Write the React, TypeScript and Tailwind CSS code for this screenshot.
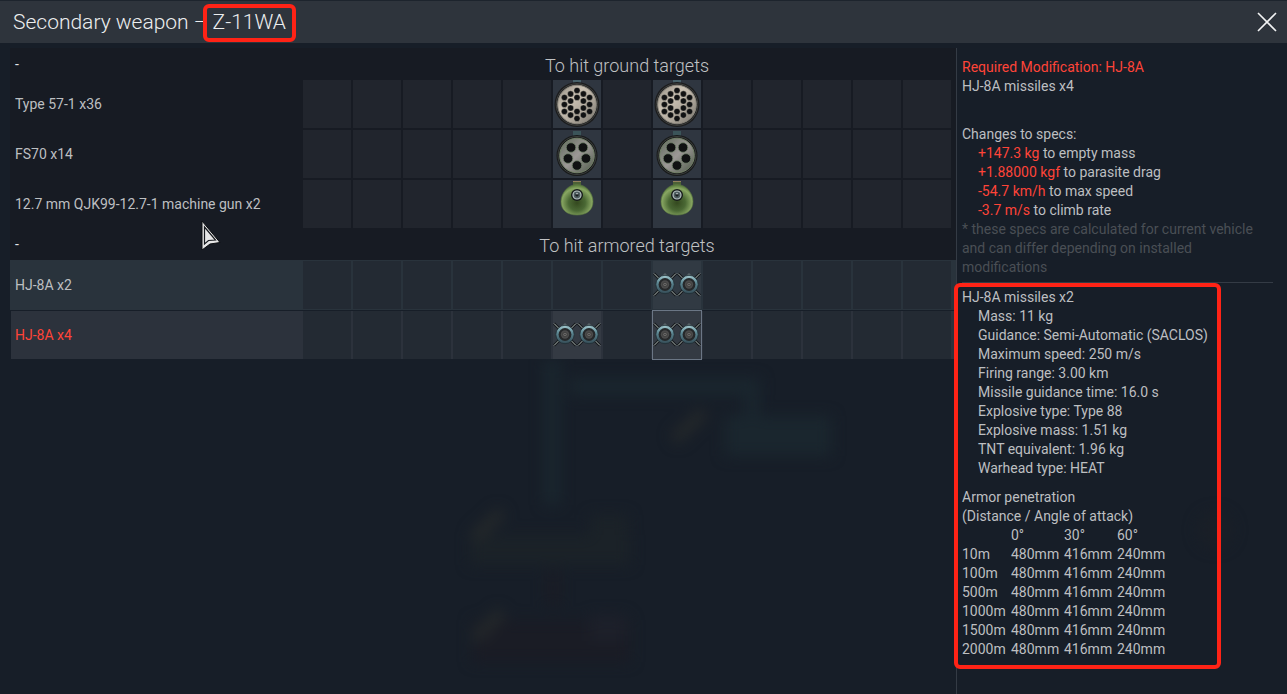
import type { ReactNode } from 'react';
import { clsx } from 'clsx';

type WeaponIcon = 'pod18' | 'pod5' | 'gun' | 'missiles';

interface WeaponRow {
  id: string;
  name: string;
  icon: WeaponIcon;
  slots: number[];
}

const SLOTS = Array.from({ length: 13 }, (_, i) => i);

const GROUND: WeaponRow[] = [
  { id: 'type57', name: 'Type 57-1 x36', icon: 'pod18', slots: [5, 7] },
  { id: 'fs70', name: 'FS70 x14', icon: 'pod5', slots: [5, 7] },
  { id: 'qjk99', name: '12.7 mm QJK99-12.7-1 machine gun x2', icon: 'gun', slots: [5, 7] },
];

const SPEC_CHANGES = [
  { value: '+147.3 kg', label: 'to empty mass' },
  { value: '+1.88000 kgf', label: 'to parasite drag' },
  { value: '-54.7 km/h', label: 'to max speed' },
  { value: '-3.7 m/s', label: 'to climb rate' },
];

const MISSILE_SPECS = [
  'Mass: 11 kg',
  'Guidance: Semi-Automatic (SACLOS)',
  'Maximum speed: 250 m/s',
  'Firing range: 3.00 km',
  'Missile guidance time: 16.0 s',
  'Explosive type: Type 88',
  'Explosive mass: 1.51 kg',
  'TNT equivalent: 1.96 kg',
  'Warhead type: HEAT',
];

const ANGLES = ['0°', '30°', '60°'];
const DISTANCES = ['10m', '100m', '500m', '1000m', '1500m', '2000m'];
const PENETRATION = ['480mm', '416mm', '240mm'];

const POD18_HOLES = [
  [0, -14], [0, -7], [0, 7], [0, 14],
  [-6.4, -10.6], [-6.4, -3.5], [-6.4, 3.5], [-6.4, 10.6],
  [6.4, -10.6], [6.4, -3.5], [6.4, 3.5], [6.4, 10.6],
  [-12.6, -7], [-12.6, 0], [-12.6, 7],
  [12.6, -7], [12.6, 0], [12.6, 7],
];

const POD5_HOLES = [[-6, -8], [6, -8], [-9, 3], [9, 3], [0, 10]];

function Gradients() {
  return (
    <svg className="absolute h-0 w-0" aria-hidden="true">
      <defs>
        <linearGradient id="plate" x1="0" y1="0" x2="1" y2="1">
          <stop offset="0" stopColor="#8b877d" />
          <stop offset="0.35" stopColor="#cbc2b4" />
          <stop offset="0.6" stopColor="#b3ab9f" />
          <stop offset="1" stopColor="#77746c" />
        </linearGradient>
        <linearGradient id="steel" x1="0" y1="0" x2="1" y2="1">
          <stop offset="0" stopColor="#5f6a5b" />
          <stop offset="0.5" stopColor="#9c9896" />
          <stop offset="1" stopColor="#4c5847" />
        </linearGradient>
        <radialGradient id="bulb" cx="0.5" cy="0.6" r="0.58">
          <stop offset="0" stopColor="#34491f" />
          <stop offset="0.45" stopColor="#4a6834" />
          <stop offset="0.82" stopColor="#88a662" />
          <stop offset="1" stopColor="#587a3c" />
        </radialGradient>
        <linearGradient id="nose" x1="0" y1="0" x2="0" y2="1">
          <stop offset="0" stopColor="#a8cdd3" />
          <stop offset="0.4" stopColor="#5d8894" />
          <stop offset="1" stopColor="#344b55" />
        </linearGradient>
      </defs>
    </svg>
  );
}

function RocketPod18() {
  return (
    <svg viewBox="0 0 48 48" className="size-12" aria-hidden="true">
      <rect x="20" y="0" width="8" height="3" fill="#47616a" />
      <circle cx="24" cy="24.5" r="22.5" fill="#1b1c1d" />
      <circle cx="24" cy="24.5" r="20.8" fill="none" stroke="#3f403e" strokeWidth="1" />
      <circle cx="24" cy="24.5" r="19.3" fill="url(#plate)" stroke="#8d897f" strokeWidth="1" />
      {POD18_HOLES.map(([x, y]) => (
        <circle key={`${x},${y}`} cx={24 + x} cy={24.5 + y} r="3.1" fill="#111213" stroke="#d0c7b8" strokeWidth="0.4" />
      ))}
    </svg>
  );
}

function RocketPod5() {
  return (
    <svg viewBox="0 0 48 48" className="size-12" aria-hidden="true">
      <rect x="20" y="1" width="8" height="6" fill="#3b5459" />
      <circle cx="24" cy="25.5" r="20.5" fill="#181a1a" />
      <circle cx="24" cy="25.5" r="19" fill="none" stroke="#3a3d3b" strokeWidth="1" />
      <circle cx="24" cy="25.5" r="17.3" fill="url(#steel)" stroke="#75836a" strokeWidth="1" />
      {POD5_HOLES.map(([x, y]) => (
        <circle key={`${x},${y}`} cx={24 + x} cy={25.5 + y} r="4.8" fill="#101112" stroke="#71836b" strokeWidth="0.8" />
      ))}
    </svg>
  );
}

function GunPod() {
  return (
    <svg viewBox="0 0 48 48" className="size-12" aria-hidden="true">
      <rect x="20" y="1" width="8" height="5" fill="#4c6136" />
      <rect x="20" y="1" width="8" height="1" fill="#93805c" />
      <path
        d="M24 4.5C33 4.5 40 13 40 21.5C40 30 34 35 24 35C14 35 8 30 8 21.500C8 13 15 4.500 24 4.500Z"
        fill="url(#bulb)"
        stroke="#5c7a40"
        strokeWidth="0.6"
      />
      <circle cx="24" cy="15" r="6" fill="#171b1b" />
      <circle cx="24" cy="15" r="4" fill="#4f5d60" stroke="#b8c4c4" strokeWidth="1.2" />
      <circle cx="24" cy="15" r="1.6" fill="#15191b" />
      <circle cx="24" cy="13.8" r="0.8" fill="#dfe8e8" />
    </svg>
  );
}

function Missile({ cx }: { cx: number }) {
  const fins = `M${cx - 11} 12.5L${cx + 11} 34.5M${cx + 11} 12.5L${cx - 11} 34.5`;
  return (
    <g>
      <path d={fins} stroke="#15191c" strokeWidth="3" />
      <path d={fins} stroke="#a9b2af" strokeWidth="1" />
      <path d={`M${cx - 3} 15L${cx} 12L${cx + 3} 15Z`} fill="#5b656a" />
      <circle cx={cx} cy="23.5" r="9.2" fill="url(#nose)" stroke="#1e2d34" strokeWidth="0.8" />
      <circle cx={cx} cy="23.5" r="6.4" fill="#26282a" />
      <circle cx={cx} cy="23.5" r="4.2" fill="#4b4b4b" />
      <circle cx={cx} cy="23.5" r="2.2" fill="#6d6c6b" stroke="#2d2d2d" strokeWidth="0.6" />
      <circle cx={cx} cy="23.5" r="0.8" fill="#3a3a3a" />
    </g>
  );
}

function MissilePair() {
  return (
    <svg viewBox="0 0 48 48" className="size-12" aria-hidden="true">
      <Missile cx={12} />
      <Missile cx={36} />
    </svg>
  );
}

const ICONS: Record<WeaponIcon, ReactNode> = {
  pod18: <RocketPod18 />,
  pod5: <RocketPod5 />,
  gun: <GunPod />,
  missiles: <MissilePair />,
};

function SectionHeading({ title }: { title: string }) {
  return (
    <div className="flex h-8 items-center pr-[5px]">
      <div className="flex-1 pl-[5px] text-[#e3e5e6]">-</div>
      <h2 className="w-[648px] pt-1 text-center text-[18px] leading-6 font-light text-[#c0c2c4]">{title}</h2>
    </div>
  );
}

interface SlotRowProps {
  row: WeaponRow;
  selected?: number;
  className?: string;
  nameClass?: string;
  slotClass: string;
  filledClass: string;
}

function SlotRow({ row, selected, className, nameClass = 'pl-[5px]', slotClass, filledClass }: SlotRowProps) {
  return (
    <div className={clsx('flex items-center pr-[5px]', className)}>
      <div className={clsx('flex-1', nameClass)}>{row.name}</div>
      <div className="flex gap-0.5">
        {SLOTS.map((slot) =>
          row.slots.includes(slot) ? (
            <button
              key={slot}
              type="button"
              aria-label={`${row.name}, slot ${slot + 1}`}
              className={clsx('size-12', filledClass, slot === selected && 'outline outline-[#6b7685]')}
            >
              {ICONS[row.icon]}
            </button>
          ) : (
            <div key={slot} className={clsx('size-12', slotClass)} />
          ),
        )}
      </div>
    </div>
  );
}

// Blurred research tree that shows faintly behind the window
function Backdrop() {
  return (
    <svg className="absolute inset-0 h-full w-full" aria-hidden="true">
      <g className="blur-[7px]">
        <g fill="#1a262e">
          <rect x="544" y="360" width="16" height="145" />
          <rect x="570" y="378" width="190" height="17" />
          <rect x="745" y="380" width="14" height="40" />
          <rect x="725" y="416" width="106" height="40" />
        </g>
        <g fill="#1b2228">
          <rect x="470" y="535" width="160" height="30" />
          <rect x="590" y="515" width="38" height="24" />
        </g>
        <g fill="#1a1c25">
          <rect x="472" y="620" width="158" height="42" />
          <rect x="546" y="570" width="14" height="36" />
        </g>
        <rect x="590" y="615" width="36" height="26" fill="#1d202a" />
        <g stroke="#24282a" strokeWidth="12">
          <path d="M474 538L502 512" />
          <path d="M474 640L502 612" />
          <path d="M674 440L704 412" />
        </g>
        <circle cx="1215" cy="530" r="18" fill="#1a1f27" />
      </g>
    </svg>
  );
}

function Cursor() {
  return (
    <svg viewBox="0 0 22 30" className="absolute top-[220px] left-[200px] h-[30px] w-[22px]" aria-hidden="true">
      <path d="M2 1V30L10 24L20 22.5Z" fill="#e6e6e6" stroke="#0c0e11" strokeWidth="1" />
      <path d="M4.5 7V24L8.5 20.5L15.5 20Z" fill="#e6e6e6" stroke="#15181c" strokeWidth="1.2" />
    </svg>
  );
}

export default function App() {
  return (
    <div className="relative flex min-h-screen flex-col overflow-hidden bg-[#171e28] font-['Roboto',sans-serif] text-[14px] leading-[19px] text-[#bdbfc1]">
      <Gradients />
      <Backdrop />

      <header className="relative flex h-[43px] items-center justify-between border-t border-[#1d242d] bg-[#2e343c] pr-[9px] pl-[13px]">
        <h1 className="text-[21px] leading-7 font-light text-[#eceeef]">
          Secondary weapon –{' '}
          <span className="relative">
            Z-11WA
            <span className="absolute -inset-x-2.5 -top-1.5 -bottom-2 rounded-md border-4 border-[#ff2316]" />
          </span>
        </h1>
        <button type="button" aria-label="Close" className="p-px">
          <svg viewBox="0 0 20 20" className="size-5" stroke="#f2f3f4" strokeWidth="1.6" aria-hidden="true">
            <path d="M1 1L19 19M19 1L1 19" />
          </svg>
        </button>
      </header>

      <main className="relative flex flex-1 pt-[5px] pl-[10px]">
        <section className="flex-1">
          <div className="bg-[#171b23]">
            <SectionHeading title="To hit ground targets" />
            <div className="flex flex-col gap-0.5">
              {GROUND.map((row) => (
                <SlotRow key={row.id} row={row} slotClass="bg-[#21252d]" filledClass="bg-[#2f3640]" />
              ))}
            </div>
            <SectionHeading title="To hit armored targets" />
          </div>
          <SlotRow
            row={{ id: 'hj8a-2', name: 'HJ-8A x2', icon: 'missiles', slots: [7] }}
            className="bg-[#29333c] py-px"
            slotClass="bg-[#232a33]"
            filledClass="bg-[#313a43]"
          />
          <SlotRow
            row={{ id: 'hj8a-4', name: 'HJ-8A x4', icon: 'missiles', slots: [5, 7] }}
            selected={7}
            className="mt-px ml-px bg-[#2c323c]"
            nameClass="pl-1 text-[#ff4438]"
            slotClass="bg-[#232a33]"
            filledClass="bg-[#343a43]"
          />
        </section>

        <aside className="w-[331px] border-l border-[#343b45] pt-[10px] pr-[14px] pl-[5px]">
          <p className="text-[#ff4438]">Required Modification: HJ-8A</p>
          <p>HJ-8A missiles x4</p>

          <p className="mt-[29px]">Changes to specs:</p>
          <ul className="pl-4">
            {SPEC_CHANGES.map((s) => (
              <li key={s.label}>
                <span className="text-[#ff4438]">{s.value}</span> {s.label}
              </li>
            ))}
          </ul>
          <p className="text-[#4a4f55]">
            * these specs are calculated for current vehicle and can differ depending on installed modifications
          </p>

          <div className="relative mt-[5px] border-t border-[#343b45] pt-[5px]">
            <p>HJ-8A missiles x2</p>
            <ul className="pl-4">
              {MISSILE_SPECS.map((spec) => (
                <li key={spec}>{spec}</li>
              ))}
            </ul>

            <p className="mt-[10px]">Armor penetration</p>
            <p>(Distance / Angle of attack)</p>
            <table className="table-fixed border-collapse text-left">
              <thead>
                <tr>
                  <th className="w-[49px] p-0" aria-label="Distance" />
                  {ANGLES.map((a) => (
                    <th key={a} className="w-[53px] p-0 font-normal">
                      {a}
                    </th>
                  ))}
                </tr>
              </thead>
              <tbody>
                {DISTANCES.map((d) => (
                  <tr key={d}>
                    <th scope="row" className="p-0 font-normal">
                      {d}
                    </th>
                    {PENETRATION.map((p) => (
                      <td key={p} className="p-0">
                        {p}
                      </td>
                    ))}
                  </tr>
                ))}
              </tbody>
            </table>
            <div className="pointer-events-none absolute top-0 right-[52px] -bottom-[10px] -left-2 rounded-md border-4 border-[#ff2316]" />
          </div>
        </aside>
      </main>

      <Cursor />
    </div>
  );
}
